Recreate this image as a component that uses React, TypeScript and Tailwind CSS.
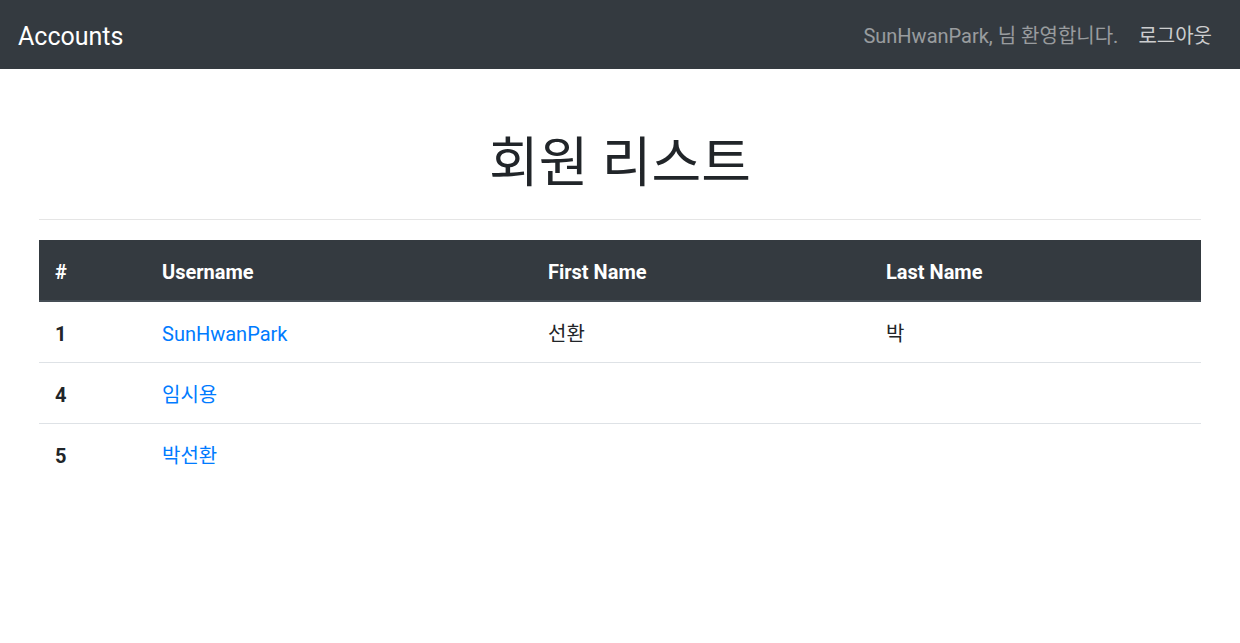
import React from 'react';

interface Member {
  id: number;
  username: string;
  firstName: string;
  lastName: string;
}

const members: Member[] = [
  { id: 1, username: 'SunHwanPark', firstName: '선환', lastName: '박' },
  { id: 4, username: '임시용', firstName: '', lastName: '' },
  { id: 5, username: '박선환', firstName: '', lastName: '' },
];

const font = { fontFamily: 'Roboto, "Noto Sans CJK KR", sans-serif' };

const App: React.FC = () => {
  return (
    <div className="min-h-screen bg-white text-[20px] text-[#212529]" style={font}>
      <nav className="flex h-[69px] items-center justify-between bg-[#343a40] px-[18px] pt-[3px]">
        <a href="#" className="text-[25px] leading-[37px] text-white">Accounts</a>
        <div className="flex items-center">
          <span className="px-[10px] text-[20px] text-white/50">SunHwanPark, 님 환영합니다.</span>
          <a href="#" className="pl-[10px] pr-[10px] text-[20px] text-white/75">로그아웃</a>
        </div>
      </nav>

      <div className="mx-auto w-[1200px] px-[19px]">
        <h1 className="mt-[65px] mb-[10px] text-center text-[54px] font-normal leading-[60px]">회원 리스트</h1>
        <hr className="mt-[25px] mb-[20px] border-t border-[#e5e5e5]" />

        <table className="w-full border-collapse">
          <thead>
            <tr className="bg-[#343a40] text-white">
              <th className="w-[107px] border-b-2 border-[#454d55] px-[16px] pt-[17px] pb-[13px] text-left font-bold leading-[30px]">#</th>
              <th className="w-[386px] border-b-2 border-[#454d55] px-[16px] pt-[17px] pb-[13px] text-left font-bold leading-[30px]">Username</th>
              <th className="w-[338px] border-b-2 border-[#454d55] px-[16px] pt-[17px] pb-[13px] text-left font-bold leading-[30px]">First Name</th>
              <th className="border-b-2 border-[#454d55] px-[16px] pt-[17px] pb-[13px] text-left font-bold leading-[30px]">Last Name</th>
            </tr>
          </thead>
          <tbody>
            {members.map((m, i) => (
              <tr key={m.id} className={i < members.length - 1 ? 'border-b border-[#dee2e6]' : ''}>
                <th className="px-[16px] pt-[17px] pb-[13px] text-left font-bold leading-[30px]">{m.id}</th>
                <td className="px-[16px] pt-[17px] pb-[13px] leading-[30px]">
                  <a href="#" className="text-[#007bff]">{m.username}</a>
                </td>
                <td className="px-[16px] pt-[17px] pb-[13px] leading-[30px]">{m.firstName}</td>
                <td className="px-[16px] pt-[17px] pb-[13px] leading-[30px]">{m.lastName}</td>
              </tr>
            ))}
          </tbody>
        </table>
      </div>
    </div>
  );
};

export default App;
